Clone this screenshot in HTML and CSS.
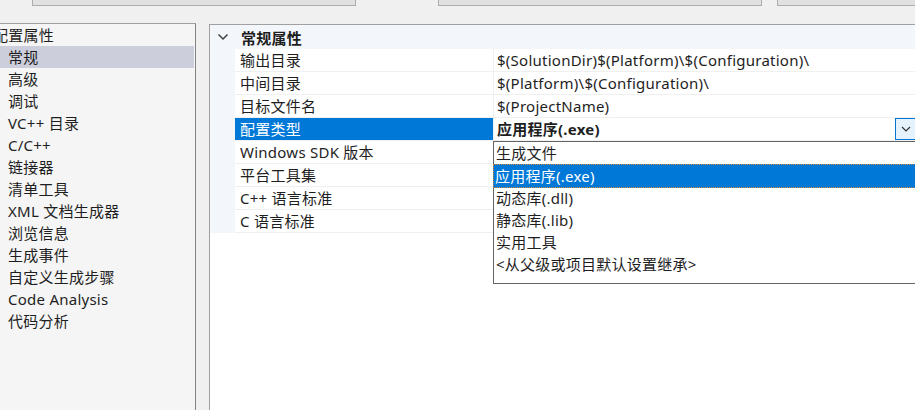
FILE: index.html
```
<!DOCTYPE html>
<html lang="zh-CN">
<head>
    <meta charset="UTF-8">
    <title>属性页</title>
    <link rel="stylesheet" href="styles.css">
</head>
<body>
    <div class="tabs">
        <div class="tab tab-a"></div>
        <div class="tab tab-b"></div>
        <div class="tab tab-c"></div>
    </div>

    <div class="main">
        <div class="tree">
            <div class="tree-item root">配置属性</div>
            <div class="tree-item active">常规</div>
            <div class="tree-item">高级</div>
            <div class="tree-item">调试</div>
            <div class="tree-item">VC++ 目录</div>
            <div class="tree-item">C/C++</div>
            <div class="tree-item">链接器</div>
            <div class="tree-item">清单工具</div>
            <div class="tree-item">XML 文档生成器</div>
            <div class="tree-item">浏览信息</div>
            <div class="tree-item">生成事件</div>
            <div class="tree-item">自定义生成步骤</div>
            <div class="tree-item">Code Analysis</div>
            <div class="tree-item">代码分析</div>
        </div>

        <div class="grid">
            <div class="group">
                <svg class="chev" width="12" height="8" viewBox="0 0 12 8"><path d="M1.5 1.5 L6 6 L10.5 1.5" fill="none" stroke="#404040" stroke-width="1.5"/></svg>
                <span>常规属性</span>
            </div>
            <div class="rows">
                <div class="row"><div class="name">输出目录</div><div class="value">$(SolutionDir)$(Platform)\$(Configuration)\</div></div>
                <div class="row"><div class="name">中间目录</div><div class="value">$(Platform)\$(Configuration)\</div></div>
                <div class="row"><div class="name">目标文件名</div><div class="value">$(ProjectName)</div></div>
                <div class="row selected">
                    <div class="name">配置类型</div>
                    <div class="value bold">应用程序(.exe)
                        <span class="drop-btn">
                            <svg width="10" height="6" viewBox="0 0 10 6"><path d="M1 1 L5 5 L9 1" fill="none" stroke="#333" stroke-width="1.2"/></svg>
                        </span>
                    </div>
                </div>
                <div class="row"><div class="name">Windows SDK 版本</div><div class="value"></div></div>
                <div class="row"><div class="name">平台工具集</div><div class="value"></div></div>
                <div class="row"><div class="name">C++ 语言标准</div><div class="value"></div></div>
                <div class="row"><div class="name">C 语言标准</div><div class="value"></div></div>
            </div>

            <div class="dropdown">
                <div class="opt">生成文件</div>
                <div class="opt current">应用程序(.exe)</div>
                <div class="opt">动态库(.dll)</div>
                <div class="opt">静态库(.lib)</div>
                <div class="opt">实用工具</div>
                <div class="opt">&lt;从父级或项目默认设置继承&gt;</div>
            </div>
        </div>
    </div>
</body>
</html>
```

FILE: styles.css
```
body {
    margin: 0;
    background: #f0f0f0;
    font-family: "Noto Sans", "Noto Sans CJK SC", sans-serif;
    font-size: 15px;
    letter-spacing: 0.25px;
    color: #1e1e1e;
    overflow: hidden;
    height: 410px;
}
.tabs {
    display: flex;
    height: 6px;
}
.tab {
    height: 5px;
    background: #e1e1e1;
    border: 1px solid #adadad;
    border-top: none;
}
.tab-a {
    margin-left: 32px;
    width: 322px;
}
.tab-b {
    margin-left: 82px;
    width: 322px;
}
.tab-c {
    margin-left: 15px;
    flex: 1;
    border-right: none;
}
.main {
    display: flex;
    margin-top: 17px;
    height: 400px;
}
.tree {
    width: 195px;
    background: #f5f5f5;
    border-top: 1px solid #a0a0a0;
    border-right: 1px solid #838383;
}
.tree-item {
    height: 22px;
    line-height: 22px;
    padding-left: 8px;
    white-space: nowrap;
}
.tree-item.root {
    padding-left: 0;
    margin-left: -7px;
}
.tree-item.active {
    background: #cccedb;
    margin-right: 1px;
}
.grid {
    position: relative;
    flex: 1;
    margin-left: 13px;
    margin-top: 1px;
    background: #fff;
    border-top: 1px solid #a0a0a0;
    border-left: 1px solid #a0a0a0;
}
.group {
    display: flex;
    align-items: center;
    height: 24px;
    background: #f3f6fb;
    font-weight: bold;
}
.chev {
    margin-left: 7px;
    margin-right: 12px;
}
.rows {
    border-left: 25px solid #f3f6fb;
}
.row {
    display: flex;
    height: 22px;
    line-height: 22px;
    border-bottom: 1px solid #f0f0f0;
}
.name {
    width: 253px;
    padding-left: 5px;
    border-right: 1px solid #f0f0f0;
    white-space: nowrap;
}
.value {
    flex: 1;
    padding-left: 3px;
    white-space: nowrap;
    position: relative;
}
.row.selected .name {
    background: #0078d7;
    color: #fff;
}
.value.bold {
    font-weight: bold;
}
.drop-btn {
    position: absolute;
    right: -2px;
    top: 0;
    width: 20px;
    height: 20px;
    background: #e5f1fb;
    border: 1px solid #0078d7;
    display: flex;
    align-items: center;
    justify-content: center;
}
.dropdown {
    position: absolute;
    left: 283px;
    top: 116px;
    width: 440px;
    height: 141px;
    background: #fff;
    border: 1px solid #646464;
}
.opt {
    height: 22px;
    line-height: 22px;
    padding-left: 2px;
    white-space: nowrap;
}
.opt.current {
    background: #0078d7;
    color: #fff;
    border: 1px dotted #d9862a;
    height: 22px;
    line-height: 22px;
    padding-left: 1px;
    margin: 0 0 -1px -1px;
}
```
